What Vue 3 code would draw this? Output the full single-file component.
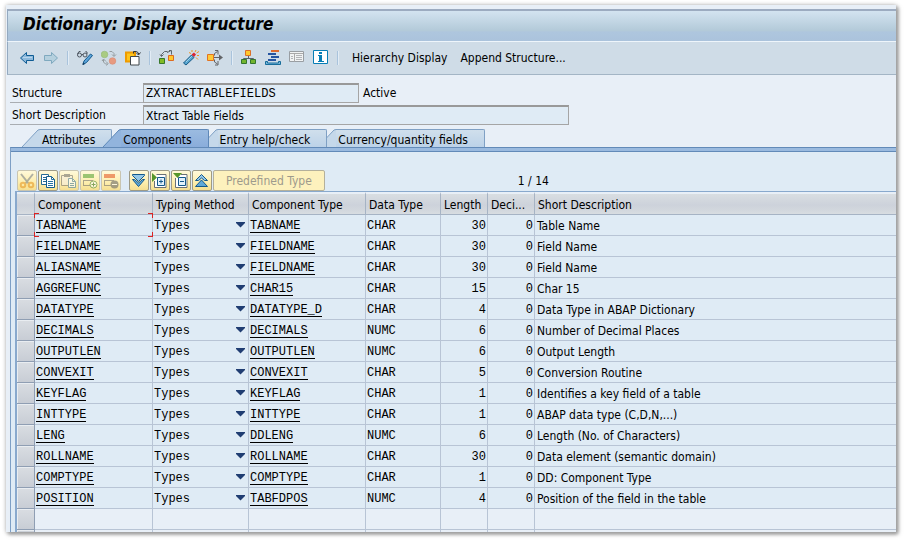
<script setup>
const tabs = ['Attributes', 'Components', 'Entry help/check', 'Currency/quantity fields']
const activeTab = 'Components'

const rows = [
  ['TABNAME', 'TABNAME', 'CHAR', 30, 'Table Name'],
  ['FIELDNAME', 'FIELDNAME', 'CHAR', 30, 'Field Name'],
  ['ALIASNAME', 'FIELDNAME', 'CHAR', 30, 'Field Name'],
  ['AGGREFUNC', 'CHAR15', 'CHAR', 15, 'Char 15'],
  ['DATATYPE', 'DATATYPE_D', 'CHAR', 4, 'Data Type in ABAP Dictionary'],
  ['DECIMALS', 'DECIMALS', 'NUMC', 6, 'Number of Decimal Places'],
  ['OUTPUTLEN', 'OUTPUTLEN', 'NUMC', 6, 'Output Length'],
  ['CONVEXIT', 'CONVEXIT', 'CHAR', 5, 'Conversion Routine'],
  ['KEYFLAG', 'KEYFLAG', 'CHAR', 1, 'Identifies a key field of a table'],
  ['INTTYPE', 'INTTYPE', 'CHAR', 1, 'ABAP data type (C,D,N,...)'],
  ['LENG', 'DDLENG', 'NUMC', 6, 'Length (No. of Characters)'],
  ['ROLLNAME', 'ROLLNAME', 'CHAR', 30, 'Data element (semantic domain)'],
  ['COMPTYPE', 'COMPTYPE', 'CHAR', 1, 'DD: Component Type'],
  ['POSITION', 'TABFDPOS', 'NUMC', 4, 'Position of the field in the table'],
].map(([name, type, dataType, length, text]) => ({ name, type, dataType, length, text }))
</script>

<template>
  <main class="window">
    <header class="titlebar"><h1>Dictionary: Display Structure</h1></header>

    <nav class="toolbar">
      <button class="tool" aria-label="Back">
        <svg viewBox="0 0 16 16"><path d="M1.500 8 7.500 2.500V5.500H14.500V10.500H7.500V13.500Z" fill="#8db9dc" stroke="#0f5c94" /><path d="M4 7.500h9" stroke="#b8d6ec" /></svg>
      </button>
      <button class="tool" aria-label="Forward">
        <svg viewBox="0 0 16 16"><path d="M14.500 8 8.500 2.500V5.500H1.500V10.500H8.500V13.500Z" fill="#b5d0de" stroke="#7fa9bf" /></svg>
      </button>
      <i class="sep"></i>
      <button class="tool" aria-label="Display or change">
        <svg viewBox="0 0 16 16"><g fill="none" stroke="#4d5660"><circle cx="2.500" cy="5" r="2" /><circle cx="8" cy="5" r="2" /><path d="M4.500 4.500h1.500M.5 4 2 1.500h1.500M10 4V2L8.500 1.500" /></g><path d="M6 14.500 7 11 13.500 4 15.500 5.500 9.500 12.500Z" fill="#5da3d8" stroke="#12598d" /><path d="M5.500 15 6 12.500 8 14Z" fill="#173d5c" /></svg>
      </button>
      <button class="tool" aria-label="Active or inactive">
        <svg viewBox="0 0 16 16"><circle cx="3.500" cy="4.500" r="3.300" fill="#a9cb83" stroke="#94b975" stroke-width=".6" /><circle cx="11.500" cy="11" r="3.300" fill="#e79a80" stroke="#d68a74" stroke-width=".6" /><g fill="none" stroke="#939b9e"><path d="M8.500 1.500H11L13 3.500V6M11 4.500l2 2 2-2M2.500 9.500V12L4.500 14H6.500M5 11.500 7 13.500 5.500 15.500M1 11l1.500-2L4.500 11" /></g></svg>
      </button>
      <button class="tool" aria-label="Other object">
        <svg viewBox="0 0 16 16"><path d="M1 2.500h9v9H1Z" fill="#ffc51b" stroke="#ef9b00" stroke-width="2" /><path d="M8.500 3.500V1.500H11.500L13.500 3V4.500M11 2.500l2.500 2.500L15.500 2.500" fill="none" stroke="#30363b" /><path d="M5.500 6.500h8.500v8.500h-8.500Z" fill="#fff" stroke="#42484c" /></svg>
      </button>
      <i class="sep"></i>
      <button class="tool" aria-label="Where-used list">
        <svg viewBox="0 0 16 16"><path d="M2.500 6V4.500L5.500 1.500H8.500M10 .5h2.500v4M1 4.500l1.500 2 2-2M8 2.500 11.500 1" fill="none" stroke="#5e666b" /><path d="M.5 8.500h5v5h-5Z" fill="#82bb25" stroke="#38782c" /><path d="M9.500 5.500h5v5h-5Z" fill="#ffc82c" stroke="#dd6b20" /></svg>
      </button>
      <button class="tool" aria-label="Activate">
        <svg viewBox="0 0 16 16"><path d="M.5 13 8.500 5 11 7.500 3 15Z" fill="#58a5cf" stroke="#185b86" /><path d="M3 12 9 6" stroke="#a0d4ec" /><path d="M8.500 4.500 11 2.500 13 4.500 11 7Z" fill="#db2632" /><path d="M9 0v2M13 0l-1 2M16 1.500 13.500 3M14 5.500h2M13 7.500l2 2M6 2.500l2 1" stroke="#f1941f" /></svg>
      </button>
      <button class="tool" aria-label="Navigate">
        <svg viewBox="0 0 16 16"><path d="M5 7.500H15M7.500 5.500V3.500L10.500 1.500M7.500 9.500V12L10.500 14M8 .5h3v4M8 15h3v-4" fill="none" stroke="#626467" /><path d="M12 4.500 16 7.500 12 10.500Z" fill="#626467" /><path d="M.5 4.500h6v6h-6Z" fill="#ffca38" stroke="#e27422" /></svg>
      </button>
      <i class="sep"></i>
      <button class="tool" aria-label="Hierarchy">
        <svg viewBox="0 0 16 16"><path d="M7.500 6v2M2.500 10V8.500h10V10" fill="none" stroke="#57636b" /><path d="M4.500.5h5v5h-5Z" fill="#ffc82c" stroke="#dc7029" /><path d="M.5 9.500h5v4h-5ZM9.500 9.500h5v4h-5Z" fill="#72b42d" stroke="#34752d" /></svg>
      </button>
      <button class="tool" aria-label="Object list">
        <svg viewBox="0 0 16 16"><path d="M6 1h8" stroke="#dc692d" stroke-width="2" /><path d="M3 4h8M6 7h8M3 10h8" stroke="#2554a0" stroke-width="2" /><path d="M.5 11.500h2v1.500h11v-1.500h2v3H.5Z" fill="#79b6da" stroke="#176d9b" /></svg>
      </button>
      <button class="tool" aria-label="Table contents">
        <svg viewBox="0 0 16 16"><path d="M.5 1.500h14v10H.5Z" fill="#f1f3f4" stroke="#999ea3" /><path d="M1 3.500h13M5.500 3.500v8" stroke="#aaa" /><path d="M2 6.500h2M2 8.500h2M7 5.500h6M7 7.500h6M7 9.500h6" stroke="#b3b5b8" /></svg>
      </button>
      <button class="tool" aria-label="Information">
        <svg viewBox="0 0 16 16"><path d="M.5.5h14v13H.5Z" fill="#fff" stroke="#087eb6" /><path d="M6 2h3v2H6ZM5 5h4v6h2v1H5v-1h1V6H5Z" fill="#087eb6" /></svg>
      </button>
      <i class="sep"></i>
      <button class="text-tool">Hierarchy Display</button>
      <button class="text-tool">Append Structure...</button>
    </nav>

    <section class="form">
      <div class="field">
        <label for="structure">Structure</label>
        <input id="structure" class="short mono" value="ZXTRACTTABLEFIELDS" readonly />
        <span class="status">Active</span>
      </div>
      <div class="field">
        <label for="description">Short Description</label>
        <input id="description" class="long" value="Xtract Table Fields" readonly />
      </div>
    </section>

    <div class="tabs" role="tablist">
      <button v-for="tab in tabs" :key="tab" class="tab" :class="{ active: tab === activeTab }" role="tab" :aria-selected="tab === activeTab">
        <svg class="slant" viewBox="0 0 18 18"><path class="slant-fill" d="M0 18 16 1 18 0V18Z" /><path class="slant-line" d="M0 18 16 1 18 .5" fill="none" /></svg>
        <span class="tab-text">{{ tab }}</span>
      </button>
    </div>

    <section class="panel">
      <div class="actions">
        <button class="action off" aria-label="Cut" disabled>
          <svg viewBox="0 0 16 16"><path d="M2 1 10 11M14 1 6 11" stroke="#7b8389" stroke-width="2" /><circle cx="4" cy="12" r="2.300" fill="none" stroke="#e79a27" stroke-width="2" /><circle cx="12" cy="12" r="2.300" fill="none" stroke="#e79a27" stroke-width="2" /></svg>
        </button>
        <button class="action" aria-label="Copy">
          <svg viewBox="0 0 16 16"><path d="M1.500 1.500h7v10h-7Z" fill="#fff" stroke="#276b96" /><path d="M3 4.500h3M3 6.500h3M3 8.500h3" stroke="#276b96" /><path d="M6.500 3.500h5l3 3v8h-8Z" fill="#fff" stroke="#155d8c" /><path d="M11.500 3.500v3h3M8 8.500h5M8 10.500h5M8 12.500h5" fill="none" stroke="#2872a2" /></svg>
        </button>
        <button class="action off" aria-label="Paste" disabled>
          <svg viewBox="0 0 16 16"><path d="M.5 2.500h11v10H.5Z" fill="#f5eee0" stroke="#77736b" /><path d="M3 1h6v3H3Z" fill="#73736f" /><path d="M7.500 5.500h4l3 3v6h-7Z" fill="#fff" stroke="#487e9e" /><path d="M11.500 5.500v3h3M9 10.500h4M9 12.500h4" fill="none" stroke="#487e9e" /></svg>
        </button>
        <button class="action off" aria-label="Insert row" disabled>
          <svg viewBox="0 0 16 16"><path d="M1 1h11v4H1Z" fill="#5ca63a" /><path d="M1 7.500h10M1.500 7v6M1 12.500h7" fill="none" stroke="#77736b" /><circle cx="11.500" cy="11.500" r="3.500" fill="#fff" stroke="#4d8d35" /><path d="M9.500 11.500h4M11.500 9.500v4" stroke="#35762e" /></svg>
        </button>
        <button class="action off" aria-label="Delete row" disabled>
          <svg viewBox="0 0 16 16"><path d="M1 1h11v4H1Z" fill="#e45d2b" /><path d="M1 7.500h10M1.500 7v6M1 12.500h7" fill="none" stroke="#77736b" /><circle cx="11.500" cy="11.500" r="4" fill="#6b6b6b" /><path d="M9 11.500h5" stroke="#fff" /></svg>
        </button>
        <i class="action-gap"></i>
        <button class="action" aria-label="Expand all">
          <svg viewBox="0 0 16 16"><path d="M1.500 1.500h12v1L7.500 8.500 1.500 2.500Z" fill="#93c7e8" stroke="#15598b" /><path d="M1.500 6.500h2l4 3.500 4-3.500h2L7.500 13.500Z" fill="#5fa8d8" stroke="#15598b" /></svg>
        </button>
        <button class="action" aria-label="Expand include">
          <svg viewBox="0 0 16 16"><path d="M4.500 1.500h9.500v13H2.500V8" fill="#fff" stroke="#697075" /><path d="M5.500 4.500h7v8h-7Z" fill="#e2f1fa" stroke="#15598b" /><path d="M7 8.500h4M9 6.500v4" stroke="#15598b" /><path d="M0 0v9l5-4.500Z" fill="#56962b" /></svg>
        </button>
        <button class="action" aria-label="Collapse include">
          <svg viewBox="0 0 16 16"><path d="M8 1.500h6v13H2.500V5" fill="#fff" stroke="#697075" /><path d="M5.500 4.500h7v8h-7Z" fill="#e2f1fa" stroke="#15598b" /><path d="M7 8.500h4" stroke="#15598b" /><path d="M0 0h9L4.500 5Z" fill="#56962b" /></svg>
        </button>
        <button class="action" aria-label="Collapse all">
          <svg viewBox="0 0 16 16"><path d="M1.500 7.500h3l3-2.500 3 2.500h3L7.500 1.500Z" fill="#93c7e8" stroke="#15598b" /><path d="M1.500 13.500h12L7.500 7Z" fill="#5fa8d8" stroke="#15598b" /></svg>
        </button>
        <button class="predefined" disabled>Predefined Type</button>
        <span class="count">1 / 14</span>
      </div>

      <table>
        <colgroup>
          <col class="w-select" /><col class="w-component" /><col class="w-method" /><col class="w-type" />
          <col class="w-data" /><col class="w-number" /><col class="w-number" /><col />
        </colgroup>
        <thead>
          <tr>
            <th></th><th>Component</th><th>Typing Method</th><th>Component Type</th>
            <th>Data Type</th><th>Length</th><th>Deci...</th><th>Short Description</th>
          </tr>
        </thead>
        <tbody>
          <tr v-for="(row, index) in rows" :key="row.name">
            <td class="selector"></td>
            <td class="mono" :class="{ focused: index === 0 }"><a href="#">{{ row.name }}</a></td>
            <td class="mono method">
              <select aria-label="Typing Method"><option>Types</option></select>
              <svg class="arrow" viewBox="0 0 9 6"><path d="M0 0h9v1L4.500 5.500 0 1Z" fill="#203d72" /></svg>
            </td>
            <td class="mono"><a href="#">{{ row.type }}</a></td>
            <td class="mono">{{ row.dataType }}</td>
            <td class="mono number">{{ row.length }}</td>
            <td class="mono number">0</td>
            <td>{{ row.text }}</td>
          </tr>
          <tr class="blank"><td class="selector"></td><td v-for="n in 7" :key="n"></td></tr>
          <tr class="blank cut"><td class="selector"></td><td v-for="n in 7" :key="n"></td></tr>
        </tbody>
      </table>
    </section>
  </main>
</template>

<style>
body { background: #fff; }
</style>

<style scoped>
* { box-sizing: border-box; }
.window {
  margin: 5px 9px 9px 6px;
  padding-top: 4px;
  overflow: hidden;
  background: #e8eff7;
  box-shadow: 0 0 4px #bbb, 2px 2px 4px #777;
  color: #000;
  font: 12px/16px "DejaVu Sans Condensed", "Noto Sans", sans-serif;
}
button, input, select { margin: 0; color: inherit; font: inherit; }
button { padding: 0; border: 0; background: none; }
svg { display: block; }
.window .mono { font-family: "Liberation Mono", monospace; }

.titlebar {
  margin-left: 1px;
  height: 33px;
  border: solid #93a9c0;
  border-width: 2px 0 0 1px;
  border-top-color: #9cabc0;
  border-bottom: 1px solid #eef5fb;
  background: linear-gradient(#d3e3f0, #b3cad9 65%, #aec6de 70%, #abc3dc);
}
h1 { margin: 0; padding: 0 15px; font-size: 17px; line-height: 27px; font-style: italic; font-weight: bold; }
.toolbar {
  display: flex;
  align-items: center;
  gap: 8px;
  margin-left: 1px;
  height: 33px;
  padding: 0 11px;
  border-left: 1px solid #93a9c0;
  border-bottom: 1px solid #a3b5c5;
  background: #cfdce7;
}
.tool, .tool svg { width: 16px; height: 16px; }
.sep { width: 2px; height: 14px; background: #a9c3dc; border-right: 1px solid #e2ecf5; }
.text-tool { margin-left: 5px; white-space: nowrap; }

.form { display: grid; gap: 2px; padding: 8px 4px 4px; }
.field { display: flex; align-items: flex-end; height: 20px; }
.field label { width: 133px; height: 18px; padding-left: 2px; border-bottom: 1px solid #a9adb2; }
.field input {
  height: 20px;
  padding: 0 2px;
  border: 1px solid #a5a5a5;
  border-top: 2px solid #999;
  background: #dfebf5;
  outline: 0;
}
.short { width: 216px; }
.long { width: 426px; }
.status { height: 18px; padding-left: 4px; }

.tabs { position: relative; display: flex; padding-left: 16px; height: 18px; }
.tab { position: relative; display: flex; height: 18px; margin-right: -9px; white-space: nowrap; }
.tab:nth-child(1) { z-index: 4; }
.tab:nth-child(2) { z-index: 3; }
.tab:nth-child(3) { z-index: 2; }
.tab:nth-child(4) { z-index: 1; }
.tab.active { z-index: 5; }
.slant { width: 18px; height: 18px; }
.slant-fill { fill: #c5d8ea; }
.slant-line { stroke: #7fa0c4; }
.tab-text {
  height: 18px;
  padding: 2px 16px 0 2px;
  border: solid #7fa0c4;
  border-width: 1px 1px 0 0;
  border-radius: 0 2px 0 0;
  background: linear-gradient(#d0dfec, #bcd2e8);
  line-height: 16px;
}
.active .tab-text { background: linear-gradient(#9bbbe0, #8aaddb); border-color: #5e88b8; }
.active .slant-fill { fill: #92b4dd; }
.active .slant-line { stroke: #5e88b8; }

.panel {
  position: relative;
  margin-left: 4px;
  padding: 20px 0 0 4px;
  border-left: 1px solid #7d9fc5;
  border-top: 1px solid #628ab8;
  background: #dfebf5;
}
.panel::before {
  content: "";
  position: absolute;
  inset: 0 0 auto;
  height: 3px;
  border-bottom: 1px solid #628ab8;
  background: #9abadf;
}
.actions { display: flex; gap: 1px; height: 23px; padding: 2px 0 0 2px; }
.action, .predefined {
  height: 21px;
  border: 1px solid #9d9a86;
  border-radius: 2px;
  background: linear-gradient(#fff9da, #fdeeae 60%, #f5df91);
}
.action { display: grid; place-items: center; width: 20px; }
.action svg { width: 16px; height: 16px; }
.off { border-color: #c9c5b0; }
.off svg { opacity: .6; }
.action-gap { width: 6px; }
.predefined { padding: 0 12px; color: #9d9a8c; border-color: #b4b09b; background: #fdf1bd; }
.count { margin-left: 192px; padding-top: 3px; }

table {
  width: 100%;
  table-layout: fixed;
  border-collapse: separate;
  border-spacing: 0;
  border-top: 1px solid #89a9cd;
  border-left: 2px solid #89a9cd;
}
.w-select { width: 18px; }
.w-component { width: 118px; }
.w-method { width: 96px; }
.w-type { width: 117px; }
.w-data { width: 75px; }
.w-number { width: 47px; }
th, td { height: 21px; padding: 0; white-space: nowrap; border: solid #b8c4d5; border-width: 0 1px 1px 0; }
th {
  height: 23px;
  padding: 1px 0 0 3px;
  border-color: #a6b3c4;
  border-top: 2px solid #e8eff7;
  background: linear-gradient(#d9dee2, #cdd2db 55%, #d2d7dd 80%, #d8dde1);
  text-align: left;
  font-weight: normal;
  line-height: 16px;
}
td { padding: 3px 0 0 1px; line-height: 16px; vertical-align: top; }
th:last-child, td:last-child { border-right: 0; }
td:last-child { padding-left: 2px; }
.selector {
  border-color: #8f9eb3;
  background: linear-gradient(#d9dde2, #c8cdd5);
  box-shadow: inset 1px 1px #e9edf1;
}
a { display: inline-block; height: 15px; border-bottom: 1px solid #000; color: #000; text-decoration: none; vertical-align: top; }
.method { position: relative; }
select { display: block; width: 100%; height: 16px; padding: 0; border: 0; background: none; appearance: none; }
.arrow { position: absolute; top: 7px; right: 3px; width: 9px; height: 6px; }
.number { padding-right: 1px; text-align: right; }
.focused { position: relative; }
.focused::before, .focused::after {
  content: "";
  position: absolute;
  top: -2px;
  bottom: -2px;
  width: 5px;
  background:
    linear-gradient(#d22, #d22) 0 0 / 100% 1px no-repeat,
    linear-gradient(#d22, #d22) 0 100% / 100% 1px no-repeat,
    linear-gradient(#d22 5px, transparent 5px, transparent calc(100% - 5px), #d22 calc(100% - 5px)) 0 0 / 1px 100% no-repeat;
}
.focused::before { left: -1px; }
.focused::after { right: -1px; background-position: 0 0, 0 100%, 100% 0; }
.blank td:not(.selector) { background: #e8eff7; }
.blank td { padding: 0; }
.cut td { height: 2px; border-bottom: 0; }
</style>
